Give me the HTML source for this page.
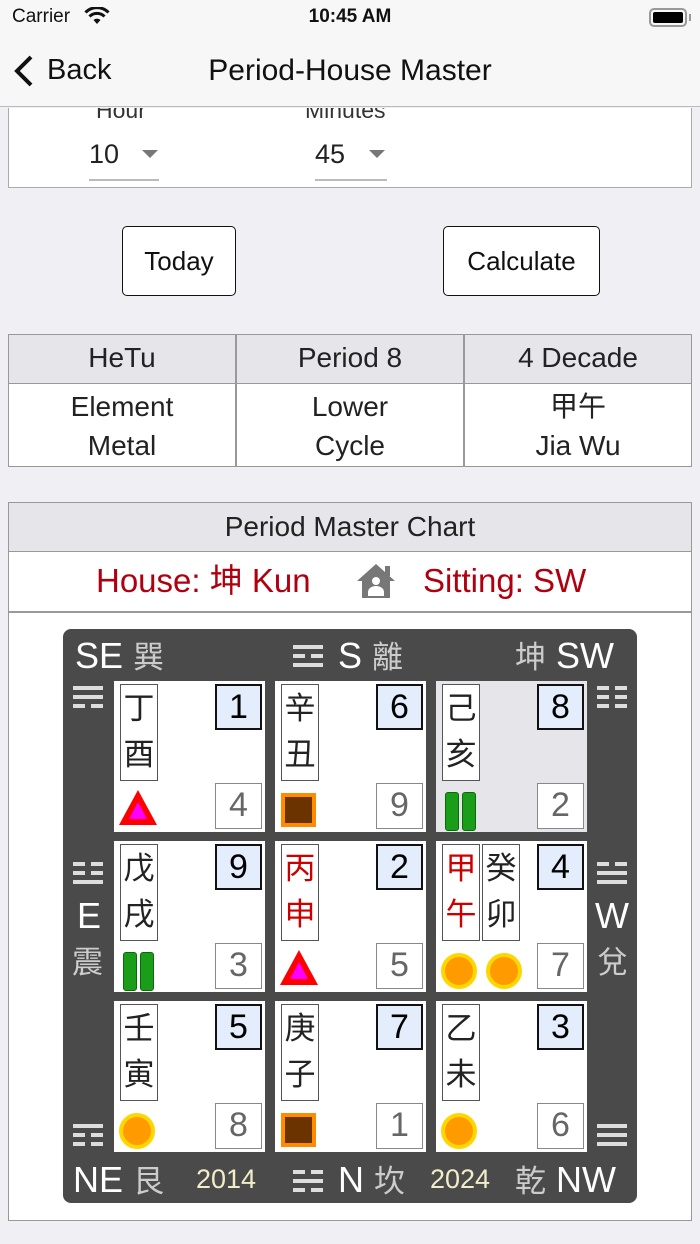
<!DOCTYPE html>
<html><head><meta charset="utf-8">
<style>
*{margin:0;padding:0;box-sizing:border-box}
body{width:700px;height:1244px;background:#efeff4;font-family:"Liberation Sans","Noto Sans CJK SC",sans-serif;position:relative;overflow:hidden;color:#222}
.a{position:absolute}
.c{display:flex;align-items:center;justify-content:center}
.tg{position:absolute;width:30px}
.tg div{height:4px;margin-bottom:5px;background:#ddd}
.tg div.b{background:linear-gradient(to right,#ddd 0 40%,transparent 40% 60%,#ddd 60%)}
.cell{position:absolute;width:151px;height:151px;background:#fff}
.st{position:absolute;top:3px;left:6px;width:38px;height:97px;border:1.5px solid #555;background:#fff;font-size:31px;line-height:46px;text-align:center;color:#222;padding-top:1px}
.st.r{color:#c00}
.n1{position:absolute;left:101px;top:3px;width:47px;height:46px;background:#e3edfb;border:2px solid #111;font-size:34px;text-align:center;line-height:42px;color:#000}
.n2{position:absolute;left:101px;top:102px;width:47px;height:46px;background:#fff;border:1.5px solid #888;font-size:34px;text-align:center;line-height:43px;color:#666}
.tri{position:absolute;left:5px;top:109px;width:0;height:0;border-left:19px solid transparent;border-right:19px solid transparent;border-bottom:35px solid #f00}
.tri::after{content:"";position:absolute;left:-9px;top:12px;border-left:9px solid transparent;border-right:9px solid transparent;border-bottom:17px solid #f0f}
.sq{position:absolute;left:6px;top:112px;width:35px;height:34px;background:#6b3300;border:4px solid #ff8c00}
.bars{position:absolute;left:9px;top:111px;width:30px;height:37px}
.bars::before,.bars::after{content:"";position:absolute;top:0;width:12px;height:37px;background:#1a9e1a;border:1.5px solid #0a6a0a;border-radius:3px}
.bars::before{left:0}.bars::after{left:17px}
.ci{position:absolute;top:112px;width:36px;height:36px;border-radius:50%;background:#ff9a00;border:4px solid #ffd700}
.lbl{position:absolute;color:#fff;font-size:36px;line-height:40px}
.cj{color:#ccc;font-size:31px}
.yr{position:absolute;color:#f2ecc8;font-size:27px}
</style></head><body>
<div class="a" style="left:0;top:0;width:700px;height:107px;background:#f7f7f7;border-bottom:1px solid #bbb"></div>
<div class="a" style="left:12px;top:6px;font-size:19px;color:#111">Carrier</div>
<svg class="a" style="left:84px;top:7px" width="26" height="18" viewBox="0 0 26 18"><path d="M13 17l3.5-4a5 5 0 0 0-7 0z" fill="#111"/><path d="M5.5 9.5a10.5 10.5 0 0 1 15 0" stroke="#111" stroke-width="3" fill="none"/><path d="M1.5 5.5a16 16 0 0 1 23 0" stroke="#111" stroke-width="3" fill="none"/></svg>
<div class="a" style="left:0;width:700px;top:6px;text-align:center;font-size:19px;font-weight:bold;color:#111">10:45 AM</div>
<div class="a" style="left:649px;top:8px;width:38px;height:19px;border:2px solid #999;border-radius:5px;padding:2px"><div style="width:100%;height:100%;background:#000;border-radius:2px"></div></div>
<div class="a" style="left:689px;top:14px;width:2px;height:7px;background:#999"></div>
<svg class="a" style="left:13px;top:54px" width="22" height="34" viewBox="0 0 22 34"><path d="M18 3L4 17l14 14" stroke="#111" stroke-width="4" fill="none"/></svg>
<div class="a" style="left:47px;top:54px;font-size:29px;color:#111">Back</div>
<div class="a" style="left:0;width:700px;top:54px;text-align:center;font-size:30px;color:#111">Period-House Master</div>
<div class="a" style="left:8px;top:108px;width:684px;height:80px;background:#fff;border:1.5px solid #aaa;border-top:none;overflow:hidden">
<div class="a" style="left:87px;top:-11px;font-size:23px;color:#333">Hour</div>
<div class="a" style="left:296px;top:-11px;font-size:23px;color:#333">Minutes</div>
<div class="a" style="left:80px;top:31px;font-size:27px;color:#222">10</div>
<div class="a" style="left:133px;top:42px;border-left:8px solid transparent;border-right:8px solid transparent;border-top:8px solid #777"></div>
<div class="a" style="left:80px;top:71px;width:70px;height:2px;background:#bbb"></div>
<div class="a" style="left:306px;top:31px;font-size:27px;color:#222">45</div>
<div class="a" style="left:360px;top:42px;border-left:8px solid transparent;border-right:8px solid transparent;border-top:8px solid #777"></div>
<div class="a" style="left:306px;top:71px;width:72px;height:2px;background:#bbb"></div>
</div>
<div class="a c" style="left:122px;top:226px;width:114px;height:70px;background:#fff;border:1.5px solid #111;border-radius:5px;font-size:26px;color:#111">Today</div>
<div class="a c" style="left:443px;top:226px;width:157px;height:70px;background:#fff;border:1.5px solid #111;border-radius:5px;font-size:26px;color:#111">Calculate</div>
<div class="a" style="left:8px;top:334px;width:684px;height:133px;background:#fff;border:1.5px solid #999"></div>
<div class="a" style="left:8px;top:334px;width:684px;height:50px;background:#e5e5ea;border:1.5px solid #999"></div>
<div class="a" style="left:235px;top:334px;width:1.5px;height:133px;background:#999"></div>
<div class="a" style="left:463px;top:334px;width:1.5px;height:133px;background:#999"></div>
<div class="a" style="left:8px;width:228px;top:342px;text-align:center;font-size:28px">HeTu</div>
<div class="a" style="left:236px;width:228px;top:342px;text-align:center;font-size:28px">Period 8</div>
<div class="a" style="left:464px;width:228px;top:342px;text-align:center;font-size:28px">4 Decade</div>
<div class="a" style="left:8px;width:228px;top:387px;text-align:center;font-size:28px;line-height:39px">Element<br>Metal</div>
<div class="a" style="left:236px;width:228px;top:387px;text-align:center;font-size:28px;line-height:39px">Lower<br>Cycle</div>
<div class="a" style="left:464px;width:228px;top:387px;text-align:center;font-size:28px;line-height:39px">甲午<br>Jia Wu</div>
<div class="a" style="left:8px;top:502px;width:684px;height:719px;background:#fff;border:1.5px solid #999"></div>
<div class="a" style="left:8px;top:502px;width:684px;height:50px;background:#e5e5ea;border:1.5px solid #999;text-align:center;font-size:28px;line-height:47px">Period Master Chart</div>
<div class="a" style="left:8px;top:611px;width:684px;height:1.5px;background:#999"></div>
<div class="a" style="left:96px;top:561px;font-size:33px;line-height:40px;color:#b00010">House: 坤 Kun</div>
<svg class="a" style="left:355px;top:562px" width="42" height="38" viewBox="0 0 42 38"><path d="M21 2L2 19h5v17h28V19h5z" fill="#777"/><rect x="30" y="4" width="5" height="10" fill="#777"/><circle cx="21" cy="19" r="4" fill="#fff"/><path d="M13 34v-4a8 6 0 0 1 16 0v4z" fill="#fff"/></svg>
<div class="a" style="left:423px;top:561px;font-size:33px;line-height:40px;color:#b00010">Sitting: SW</div>
<div class="a" style="left:63px;top:629px;width:574px;height:574px;background:#4a4a4a;border-radius:8px"></div>
<div class="lbl" style="left:75px;top:636px">SE <span class="cj">巽</span></div>
<div class="lbl" style="left:338px;top:636px">S <span class="cj">離</span></div>
<div class="lbl" style="left:515px;top:636px"><span class="cj">坤</span> SW</div>
<div class="lbl" style="left:77px;top:896px">E</div>
<div class="lbl cj" style="left:72px;top:943px">震</div>
<div class="lbl" style="left:595px;top:896px">W</div>
<div class="lbl cj" style="left:597px;top:943px">兌</div>
<div class="lbl" style="left:73px;top:1160px">NE <span class="cj">艮</span></div>
<div class="yr" style="left:196px;top:1164px">2014</div>
<div class="lbl" style="left:338px;top:1160px">N <span class="cj">坎</span></div>
<div class="yr" style="left:430px;top:1164px">2024</div>
<div class="lbl" style="left:515px;top:1160px"><span class="cj">乾</span> NW</div>
<div class="tg" style="left:73px;top:686px"><div></div><div></div><div class="b"></div></div>
<div class="tg" style="left:293px;top:645px"><div></div><div class="b"></div><div></div></div>
<div class="tg" style="left:597px;top:686px"><div class="b"></div><div class="b"></div><div class="b"></div></div>
<div class="tg" style="left:73px;top:862px"><div class="b"></div><div class="b"></div><div></div></div>
<div class="tg" style="left:597px;top:862px"><div class="b"></div><div></div><div></div></div>
<div class="tg" style="left:73px;top:1124px"><div></div><div class="b"></div><div class="b"></div></div>
<div class="tg" style="left:293px;top:1170px"><div class="b"></div><div></div><div class="b"></div></div>
<div class="tg" style="left:597px;top:1124px"><div></div><div></div><div></div></div>
<div class="cell" style="left:114px;top:681px"><div class="st">丁<br>酉</div><div class="n1">1</div><div class="n2">4</div><div class="tri"></div></div>
<div class="cell" style="left:275px;top:681px"><div class="st">辛<br>丑</div><div class="n1">6</div><div class="n2">9</div><div class="sq"></div></div>
<div class="cell" style="left:436px;top:681px;background:#e5e5ea"><div class="st">己<br>亥</div><div class="n1">8</div><div class="n2">2</div><div class="bars"></div></div>
<div class="cell" style="left:114px;top:841px"><div class="st">戊<br>戌</div><div class="n1">9</div><div class="n2">3</div><div class="bars"></div></div>
<div class="cell" style="left:275px;top:841px"><div class="st r">丙<br>申</div><div class="n1">2</div><div class="n2">5</div><div class="tri"></div></div>
<div class="cell" style="left:436px;top:841px"><div class="st r">甲<br>午</div><div class="st" style="left:46px">癸<br>卯</div><div class="n1">4</div><div class="n2">7</div><div class="ci" style="left:5px"></div><div class="ci" style="left:50px"></div></div>
<div class="cell" style="left:114px;top:1001px"><div class="st">壬<br>寅</div><div class="n1">5</div><div class="n2">8</div><div class="ci" style="left:5px"></div></div>
<div class="cell" style="left:275px;top:1001px"><div class="st">庚<br>子</div><div class="n1">7</div><div class="n2">1</div><div class="sq"></div></div>
<div class="cell" style="left:436px;top:1001px"><div class="st">乙<br>未</div><div class="n1">3</div><div class="n2">6</div><div class="ci" style="left:5px"></div></div>
</body></html>
